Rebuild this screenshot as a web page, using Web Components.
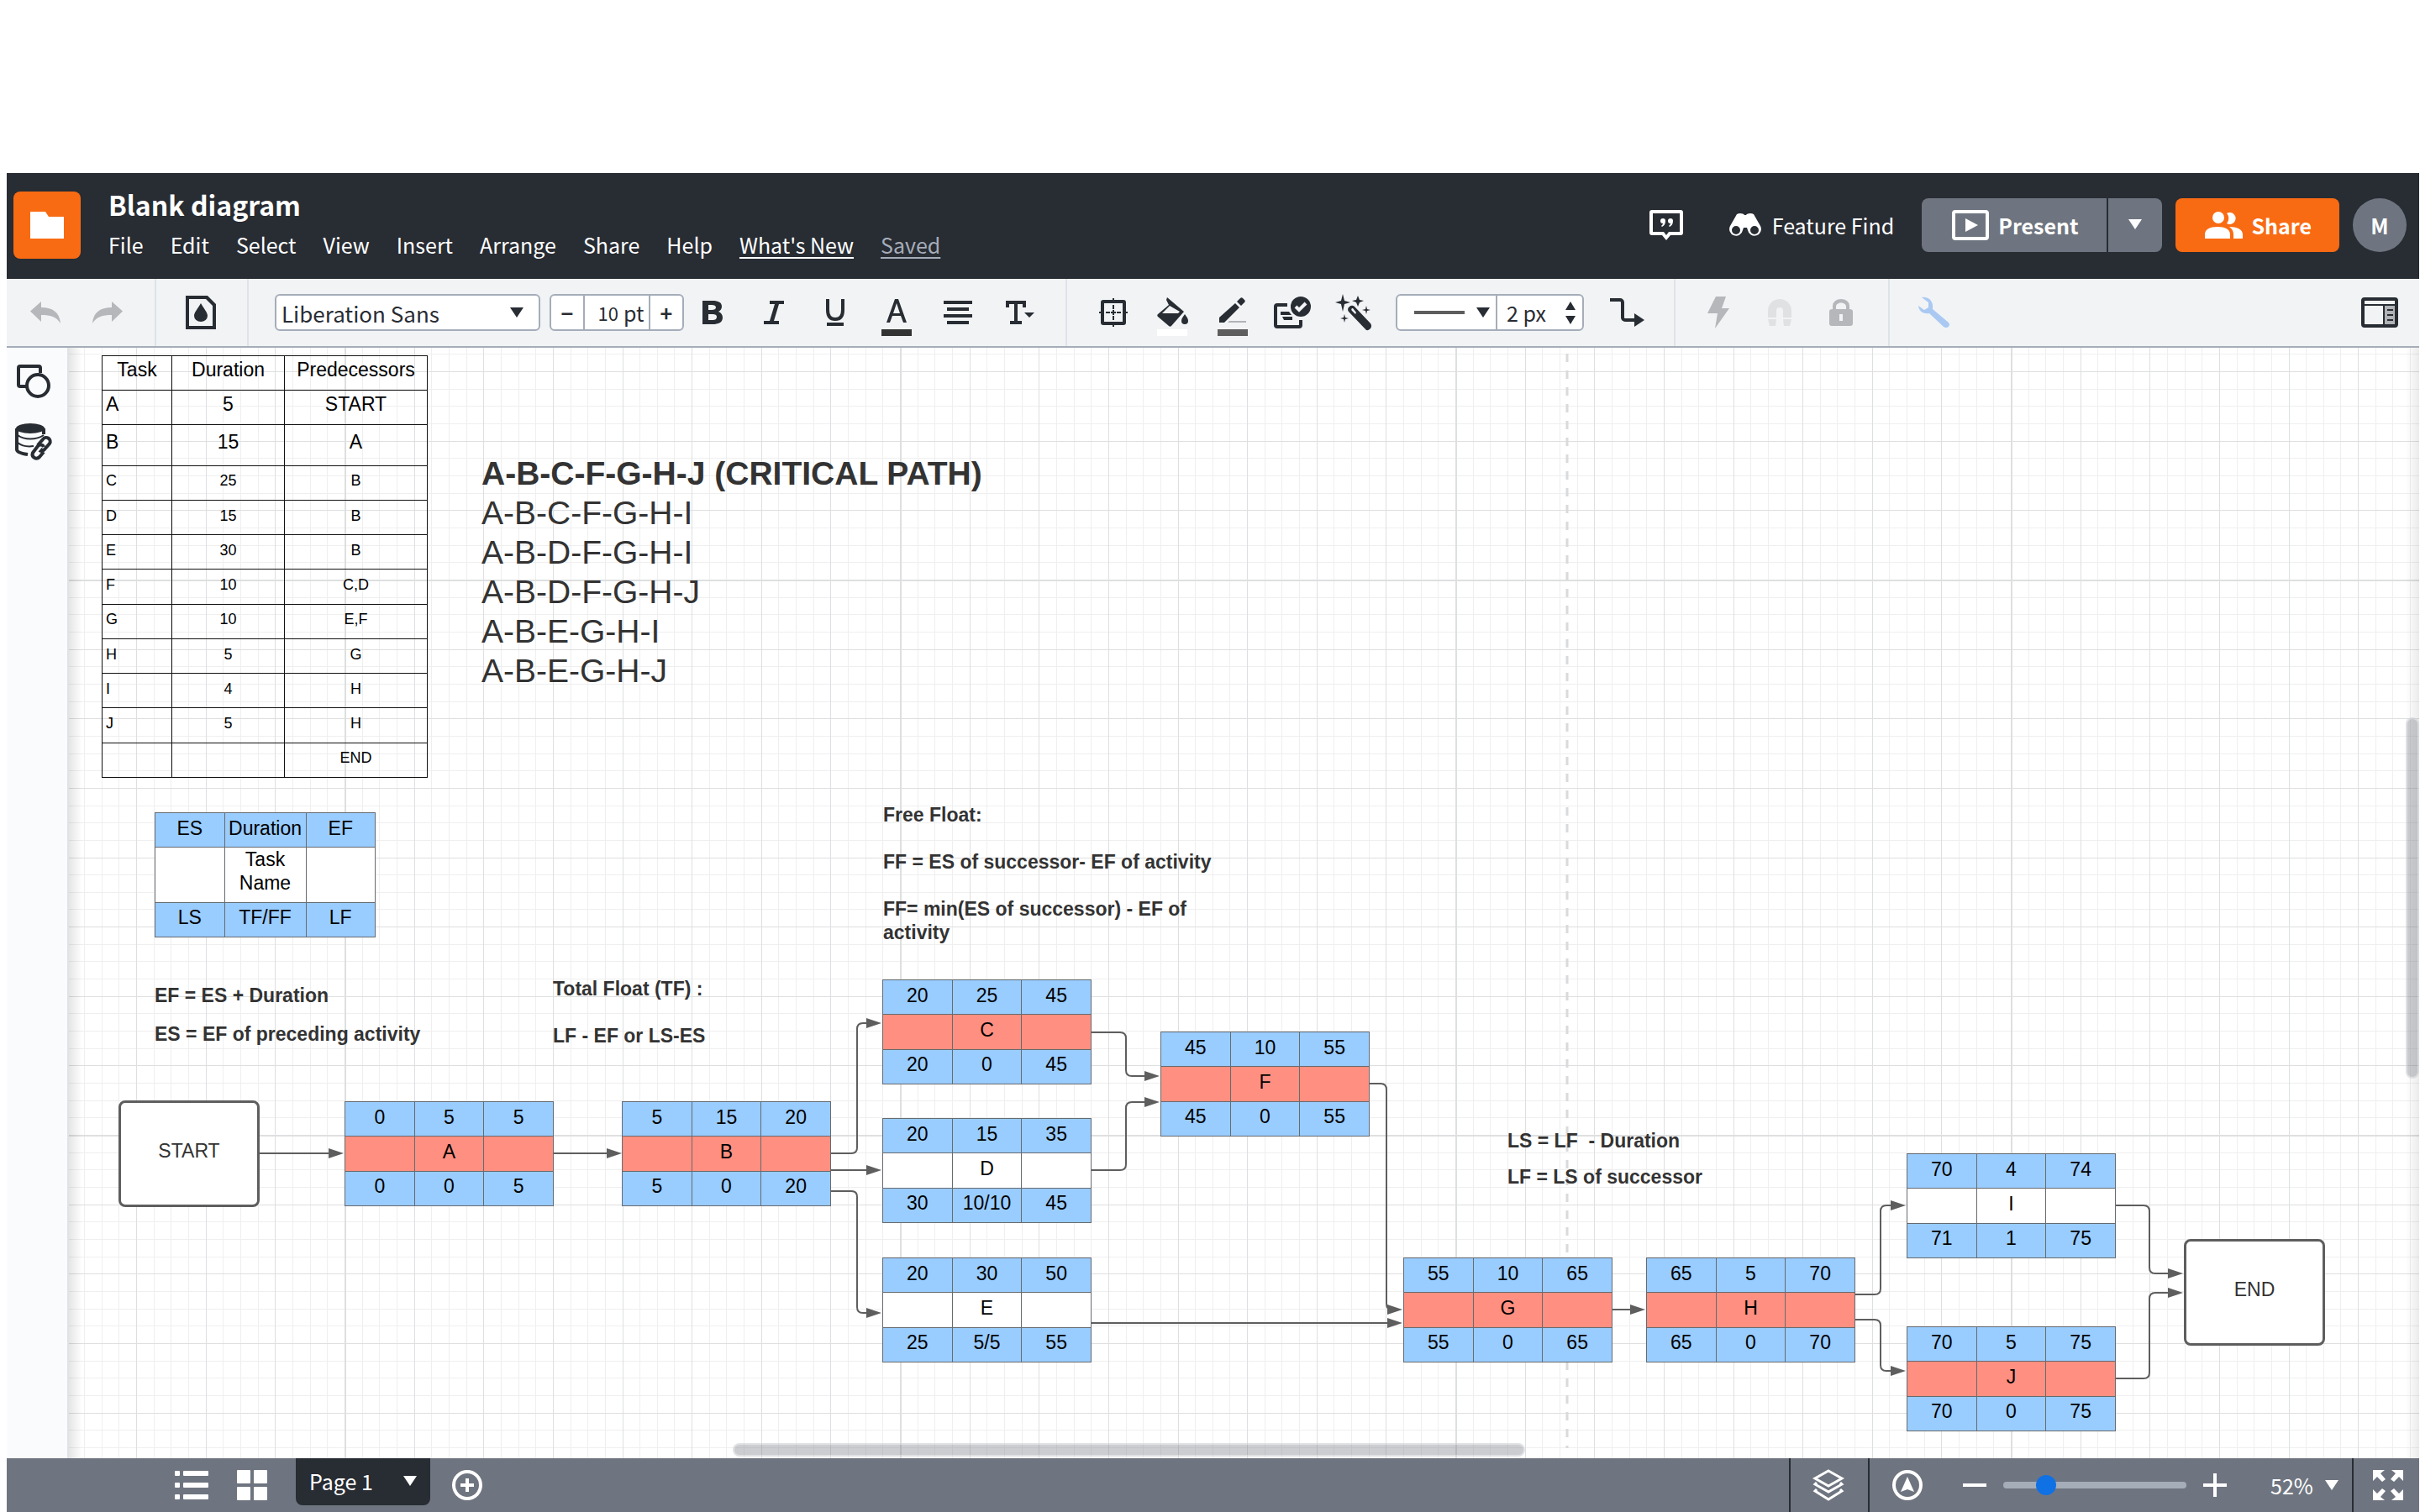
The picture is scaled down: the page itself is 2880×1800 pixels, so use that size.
<!DOCTYPE html>
<html lang="en">
<head>
<meta charset="utf-8">
<title>Blank diagram</title>
<style>
  body {
    margin: 0;
    height: 100vh;
    background-color: #fff;
    font-family: "Noto Sans CJK SC", "Open Sans", sans-serif;
    color: #282c33;
    overflow: hidden;
  }
</style>
</head>
<body>
<diagram-editor>
  <editor-header slot="header" title-text="Blank diagram"></editor-header>
  <editor-toolbar slot="toolbar"></editor-toolbar>
  <side-rail slot="rail"></side-rail>
  <diagram-canvas slot="canvas">
    <task-table x="39" y="9"></task-table>
    <text-note x="491" y="126" size="large"><b>A-B-C-F-G-H-J (CRITICAL PATH)</b>
A-B-C-F-G-H-I
A-B-D-F-G-H-I
A-B-D-F-G-H-J
A-B-E-G-H-I
A-B-E-G-H-J</text-note>
    <task-node class="legend" x="102" y="553" cells="ES,Duration,EF,,Task Name,,LS,TF/FF,LF"></task-node>
    <text-note x="102" y="757"><b>EF = ES + Duration</b></text-note>
    <text-note x="102" y="803"><b>ES = EF of preceding activity</b></text-note>
    <text-note x="576" y="749"><b>Total Float (TF) :

LF - EF or LS-ES</b></text-note>
    <text-note x="969" y="542"><b>Free Float:

FF = ES of successor- EF of activity

FF= min(ES of successor) - EF of activity</b></text-note>
    <text-note x="1712" y="930"><b>LS = LF  - Duration</b></text-note>
    <text-note x="1712" y="973"><b>LF = LS of successor</b></text-note>
    <end-point x="59" y="896">START</end-point>
    <end-point x="2517" y="1061">END</end-point>
    <task-node critical x="328" y="897" cells="0,5,5,,A,,0,0,5"></task-node>
    <task-node critical x="658" y="897" cells="5,15,20,,B,,5,0,20"></task-node>
    <task-node critical x="968" y="752" cells="20,25,45,,C,,20,0,45"></task-node>
    <task-node x="968" y="917" cells="20,15,35,,D,,30,10/10,45"></task-node>
    <task-node x="968" y="1083" cells="20,30,50,,E,,25,5/5,55"></task-node>
    <task-node critical x="1299" y="814" cells="45,10,55,,F,,45,0,55"></task-node>
    <task-node critical x="1588" y="1083" cells="55,10,65,,G,,55,0,65"></task-node>
    <task-node critical x="1877" y="1083" cells="65,5,70,,H,,65,0,70"></task-node>
    <task-node x="2187" y="959" cells="70,4,74,,I,,71,1,75"></task-node>
    <task-node critical x="2187" y="1165" cells="70,5,75,,J,,70,0,75"></task-node>
  </diagram-canvas>
  <status-bar slot="status"></status-bar>
</diagram-editor>

<script>
// name: [width, height, markup]
const ICONS = {
  folder: [40, 32, '<path d="M0 0h18l4 6h18v26H0z"/>'],
  comment: [40, 36, '<path fill-rule="evenodd" d="M3 0h34a3 3 0 0 1 3 3v24a3 3 0 0 1-3 3H25l-5 6-5-6H3a3 3 0 0 1-3-3V3a3 3 0 0 1 3-3zm1 4v22h13l3 4 3-4h13V4z"/><path d="M13 13a3 3 0 1 1 6 0c0 4-2 6-4 7l-1-1c1-1 2-2 2-3-2 0-3-1-3-3zm9 0a3 3 0 1 1 6 0c0 4-2 6-4 7l-1-1c1-1 2-2 2-3-2 0-3-1-3-3z"/>'],
  binoculars: [40, 28, '<path fill-rule="evenodd" d="M10 1c3-2 8-1 9 1h2c1-2 6-3 9-1l8 14a8 8 0 1 1-15 5l-1-3h-4l-1 3A8 8 0 1 1 2 15zM9 15a5 5 0 1 0 0 10 5 5 0 0 0 0-10zm22 0a5 5 0 1 0 0 10 5 5 0 0 0 0-10z"/>'],
  play: [44, 36, '<rect x="2" y="2" width="40" height="32" rx="2" fill="none" stroke="currentColor" stroke-width="4"/><path d="M16 10l15 8-15 8z"/>'],
  people: [45, 32, '<circle cx="16" cy="7" r="7"/><path d="M26 14a7 7 0 1 0 0-12c3 3 3 8 0 12zM0 32V27c0-6 6-9 15-9s15 3 15 9v5zM29 18c9 0 16 3 16 9v5H34v-5c0-4-2-7-5-9z"/>'],
  down: [16, 12, '<path d="M0 0h16l-8 12z"/>'],
  undo: [36, 26, '<path d="M0 11.500L13 0v7c14 0 22 6 23 19C31 18 24 16 13 16v8z"/>'],
  redo: [36, 26, '<path d="M36 11.500L23 0v7C9 7 1 13 0 26c5-8 12-10 23-10v8z"/>'],
  page: [36, 40, '<path fill-rule="evenodd" d="M0 0h26l10 10v30H0zm4 4v32h28V12l-8-8z"/><path d="M18 9c4 7 8 11 8 15a8 7 0 0 1-16 0c0-4 4-8 8-15z"/>'],
  bold: [24, 28, '<path fill-rule="evenodd" d="M0 0h12c7 0 11 2 11 7 0 3-2 5-4 6 3 1 5 4 5 7 0 6-5 8-12 8H0zm7 5v6h4c3 0 5-1 5-3s-2-3-5-3zm0 11v7h5c3 0 5-1 5-4 0-2-2-3-5-3z"/>'],
  italic: [24, 28, '<path d="M7 0h17v4h-6l-6 20h6v4H0v-4h7l6-20H7z"/>'],
  underline: [24, 32, '<path d="M3 0v13c0 7 3 11 9 11s9-4 9-11V0" fill="none" stroke="currentColor" stroke-width="4"/><path d="M2 28h20v4H2z"/>'],
  color: [36, 46, '<path fill-rule="evenodd" d="M16 2h4l10 28h-4l-3-8H13l-3 8H6zm2 5l-4 12h8z"/><path fill="#333" d="M0 38h36v8H0z"/>'],
  align: [34, 28, '<path d="M0 0h34v4H0zM4 8h26v4H4zM0 16h34v4H0zM4 24h26v4H4z"/>'],
  text: [36, 28, '<path d="M2 0h24v8h-4V4h-6v20h5v4H7v-4h5V4H6v4H2zM24 14h12l-6 6z"/>'],
  frame: [34, 34, '<rect x="4" y="4" width="26" height="26" rx="1" fill="none" stroke="currentColor" stroke-width="4"/><path d="M16 0h2v4h-2zM16 30h2v4h-2zM0 16h4v2H0zM30 16h4v2h-4zM16 8h2v5h-2zM16 21h2v5h-2zM8 16h5v2H8zM21 16h5v2h-5zM14 16h6v2h-6zM16 14h2v6h-2z"/>'],
  bucket: [38, 46, '<path fill-rule="evenodd" d="M12 0l20 17-15 17c-1 1-2 1-3 0L1 23c-1-1-1-2 0-3L14 9l-3-6zm3 10l-9 9h19l2-2z"/><path d="M33 20c3 4 4 6 4 8a4 4 0 0 1-8 0c0-2 1-4 4-8z"/><path fill="#fff" d="M0 38h36v8H0z"/>'],
  pencil: [36, 46, '<path d="M2 24L21 7l5 5L8 30H2zM23 5l4-4c1-1 2-1 3 0l2 2c1 1 1 2 0 3l-4 4z"/><path fill="#b1b3b6" d="M14 28h20v2H12z"/><path fill="#5e5e5e" d="M0 38h36v8H0z"/>'],
  form: [44, 38, '<path d="M16 10H4a2 2 0 0 0-2 2v22a2 2 0 0 0 2 2h26a2 2 0 0 0 2-2v-6" fill="none" stroke="currentColor" stroke-width="4"/><path d="M8 18h10l3 4H8zM10 24h12v4H12z"/><circle cx="32" cy="12" r="12"/><path d="M26 12l4 4 8-8" fill="none" stroke="#f1f3f5" stroke-width="4"/>'],
  wand: [40, 44, '<path fill-rule="evenodd" d="M17 15a4 4 0 0 1 6 0l19 20c3 4-1 9-5 8L16 21a4 4 0 0 1 1-6zm3 2c-1 1-1 2 0 3l4 4 1-2-4-5z"/><path d="M9 0l2 8 7 2-7 2-2 9-2-9-7-2 7-2zM27 2l2 5 5 1-5 2-2 5-2-5-5-2 5-1zM37 14l1 4 4 1-4 1-1 4-1-4-4-1 4-1zM11 24l1 4 4 1-4 1-1 4-1-4-4-1 4-1z"/>'],
  elbow: [41, 34, '<path d="M0 2h12a3 3 0 0 1 3 3v18a3 3 0 0 0 3 3h12" fill="none" stroke="currentColor" stroke-width="4"/><path d="M29 18l12 8-12 8z"/>'],
  up: [12, 10, '<path d="M0 10L6 0l6 10z"/>'],
  bolt: [26, 38, '<path d="M10 0h12l-5 14h9L9 38l3-18H0z"/>'],
  magnet: [28, 32, '<path d="M0 22V14a14 14 0 0 1 28 0v8H18v-8a4 4 0 0 0-8 0v8zM0 24h10l-1 8H2zM18 24h10l-2 8h-7z"/>'],
  lock: [28, 32, '<path fill-rule="evenodd" d="M4 12V8a10 8 0 0 1 20 0v4c3 0 4 1 4 3v14c0 2-1 3-3 3H3c-2 0-3-1-3-3V15c0-2 1-3 4-3zm4 0h12V9c0-6-12-6-12 0zm4 6v8h4v-8z"/>'],
  wrench: [37, 36, '<path d="M4 0c7-1 12 3 13 9v5l19 16c3 4-2 8-6 5L13 19c-7 1-12-2-13-9l7 5 5-3v-6z"/>'],
  panel: [44, 36, '<path fill="#b1b3b6" d="M28 10h12v22H28z"/><path fill-rule="evenodd" d="M4 0h36a4 4 0 0 1 4 4v28a4 4 0 0 1-4 4H4a4 4 0 0 1-4-4V4a4 4 0 0 1 4-4zm0 4v4h36V4zm0 6v22h22V10zm24 0v22h12V10z"/><path d="M31 14h7v2h-7zM31 20h7v2h-7zM31 26h7v2h-7z"/>'],
  shapes: [40, 40, '<path d="M12 26H4a2 2 0 0 1-2-2V4a2 2 0 0 1 2-2h22a2 2 0 0 1 2 2v6" fill="none" stroke="currentColor" stroke-width="4"/><circle cx="25" cy="25" r="13" fill="none" stroke="currentColor" stroke-width="4"/>'],
  data: [44, 44, '<ellipse cx="18" cy="6" rx="17" ry="6"/><path d="M2 6v25c0 3 6 5 13 6M34 6v7" fill="none" stroke="currentColor" stroke-width="4"/><path d="M3 14c8 6 22 6 31 0M3 23c5 4 12 5 19 4" fill="none" stroke="currentColor" stroke-width="2"/><path d="M27 26l6-7c4-5 11 0 8 5l-6 7c-2 2-5 2-6 1M33 30l-1 2M34 28c-1-3-5-3-7-1l-6 8c-2 5 4 9 8 5l5-6" fill="none" stroke="currentColor" stroke-width="4"/>'],
  list: [40, 34, '<rect width="6" height="6" rx="1"/><rect x="10" width="30" height="6" rx="1"/><rect y="14" width="6" height="6" rx="1"/><rect x="10" y="14" width="30" height="6" rx="1"/><rect y="28" width="6" height="6" rx="1"/><rect x="10" y="28" width="30" height="6" rx="1"/>'],
  tiles: [36, 36, '<rect width="16" height="16" rx="1"/><rect x="20" width="16" height="16" rx="1"/><rect y="20" width="16" height="16" rx="1"/><rect x="20" y="20" width="16" height="16" rx="1"/>'],
  add: [36, 36, '<circle cx="18" cy="18" r="16" fill="none" stroke="currentColor" stroke-width="4"/><path d="M16 10h4v6h6v4h-6v6h-4v-6h-6v-4h6z"/>'],
  layers: [36, 38, '<path d="M18 2L34 11 18 20 2 11zM4 16l-2 2 16 9 16-9-2-2M4 24l-2 2 16 10 16-10-2-2" fill="none" stroke="currentColor" stroke-width="3"/>'],
  compass: [36, 36, '<circle cx="18" cy="18" r="16" fill="none" stroke="currentColor" stroke-width="4"/><path d="M18 8l8 18-8-3-8 3z"/>'],
  minus: [28, 4, '<path d="M0 0h28v4H0z"/>'],
  plus: [28, 28, '<path d="M12 0h4v12h12v4H16v12h-4V16H0v-4h12z"/>'],
  expand: [36, 36, '<path d="M0 0h14l-5 4 6 7-4 3-6-6-5 5zM36 0v13l-5-5-6 6-4-3 6-7-5-4zM0 36V23l5 5 6-6 4 3-6 7 5 4zM36 36H22l5-4-6-7 4-3 6 6 5-5z"/>']
}

const icon = (name) => {
  const [w, h, body] = ICONS[name]
  return `<svg class="icon" width="${w}" height="${h}" viewBox="0 0 ${w} ${h}" fill="currentColor" aria-hidden="true">${body}</svg>`
}

const controls = `
    *, *::before { box-sizing: border-box; }
    button, input, select {
      font: inherit;
      color: inherit;
      background: none;
      border: 0;
      margin: 0;
      padding: 0;
      outline: none;
      appearance: none;
      -webkit-appearance: none;
    }
    button { display: flex; align-items: center; justify-content: center; white-space: nowrap; }
    .icon { display: block; flex: none; overflow: visible; }
`

class BaseElement extends HTMLElement {
  constructor() {
    super()
    this._shadowRoot = this.attachShadow({ mode: 'open' })
  }

  connectedCallback() {
    this._shadowRoot.innerHTML = `<style>${controls}${this.styles()}</style>${this.render()}`
  }

  // puts an item of the free canvas at its x and y
  place() {
    return `:host { position: absolute; left: ${this.getAttribute('x')}px; top: ${this.getAttribute('y')}px; }`
  }
}

class DiagramEditor extends BaseElement {
  styles() {
    return `
      :host {
        display: grid;
        grid-template: auto auto minmax(0, 1fr) auto / auto minmax(0, 1fr);
        box-sizing: border-box;
        height: 100vh;
        padding: 206px 1px 0 8px;
      }
      slot[name=header], slot[name=toolbar], slot[name=status] { display: block; grid-column: 1 / -1; }
      slot[name=rail], slot[name=canvas] { display: grid; }
    `
  }

  render() {
    return `
      <slot name="header"></slot>
      <slot name="toolbar"></slot>
      <slot name="rail"></slot>
      <slot name="canvas"></slot>
      <slot name="status"></slot>
    `
  }
}

class EditorHeader extends BaseElement {
  styles() {
    return `
      :host {
        display: flex;
        justify-content: space-between;
        height: 126px;
        box-sizing: border-box;
        padding: 0 15px 2px 8px;
        background-color: #282c33;
        color: #fff;
        font-size: 25px;
        line-height: 36px;
      }
      .left, .right, nav, .split { display: flex; }
      .left { gap: 33px; }
      .logo {
        width: 80px;
        height: 80px;
        margin-top: 22px;
        border-radius: 8px;
        background-color: #f96b13;
      }
      .names { display: flex; flex-direction: column; gap: 10px; padding-top: 17px; }
      h1 { margin: 0; font-size: 32px; line-height: 40px; font-weight: 700; }
      nav { gap: 32px; }
      a { color: #fff; text-underline-offset: 4px; }
      a.saved { color: #a5adb9; }
      .right { align-items: center; gap: 16px; }
      .find { gap: 12px; margin: 0 17px 0 38px; }
      .present, .more, .share { height: 64px; font-weight: 700; }
      .split { gap: 2px; }
      .present, .more { background-color: #6f7580; }
      .present { gap: 11px; padding: 0 34px 0 36px; border-radius: 8px 0 0 8px; }
      .more { width: 64px; border-radius: 0 8px 8px 0; padding-bottom: 2px; }
      .share { gap: 10px; padding: 0 33px 0 35px; border-radius: 8px; background-color: #f96b13; }
      .avatar { width: 64px; height: 64px; border-radius: 50%; background-color: #6f7580; font-weight: 700; }
    `
  }

  render() {
    const menus = ['File', 'Edit', 'Select', 'View', 'Insert', 'Arrange', 'Share', 'Help']
    return `
      <div class="left">
        <button class="logo" aria-label="Documents">${icon('folder')}</button>
        <div class="names">
          <h1>${this.getAttribute('title-text')}</h1>
          <nav>
            ${menus.map((menu) => `<button>${menu}</button>`).join('')}
            <a href="#new">What's New</a>
            <a class="saved" href="#saved">Saved</a>
          </nav>
        </div>
      </div>
      <div class="right">
        <button aria-label="Comments">${icon('comment')}</button>
        <button class="find">${icon('binoculars')}Feature Find</button>
        <div class="split">
          <button class="present">${icon('play')}Present</button>
          <button class="more" aria-label="Present options">${icon('down')}</button>
        </div>
        <button class="share">${icon('people')}Share</button>
        <button class="avatar">M</button>
      </div>
    `
  }
}

class EditorToolbar extends BaseElement {
  styles() {
    return `
      :host {
        display: flex;
        height: 82px;
        box-sizing: border-box;
        background-color: #f1f3f5;
        border-bottom: 2px solid #a5adb9;
        font-size: 25px;
      }
      .group { display: flex; align-items: center; border-right: 2px solid #dfe3e8; }
      .history { padding: 0 38px 0 28px; gap: 38px; color: #b5b7ba; }
      .theme { padding: 0 37px 0 35px; }
      .type { padding: 0 34px 0 31px; gap: 11px; }
      .shape { padding: 0 35px 0 34px; gap: 31px; }
      .actions { padding: 0 35px 0 30px; color: #b5b7ba; }
      .last { flex: auto; justify-content: space-between; border: 0; padding: 0 25px 0 34px; }
      .icons { display: flex; gap: 31px; }
      .shape .icons { gap: 29px; }
      .icons button { width: 42px; height: 44px; }
      .icons .swatch { align-items: flex-start; }
      .swatch .icon { margin-top: 4px; }
      .icons .magnet { color: #dfe1e3; }
      .wrench { color: #aac9f2; }
      .box {
        display: flex;
        align-items: center;
        height: 44px;
        border: 2px solid #a5adb9;
        border-radius: 6px;
        background-color: #fff;
      }
      .box > * { height: 40px; }
      .font { position: relative; width: 316px; }
      .font select { width: 100%; padding: 0 40px 0 6px; font-size: 26px; }
      .font .icon { position: absolute; right: 18px; top: 14px; height: 12px; pointer-events: none; }
      .size { width: 160px; margin-right: 2px; }
      .size button { width: 38px; font-weight: 700; }
      .size label { display: flex; flex: auto; align-items: center; gap: 6px; border: solid #a5adb9; border-width: 0 2px; }
      .size input { width: 40px; font-size: 22px; text-align: right; }
      .line { width: 224px; }
      .style { width: 119px; gap: 14px; padding-left: 20px; justify-content: flex-start; border-right: 2px solid #a5adb9; }
      .style i { width: 60px; height: 4px; background-color: #5e5e5e; }
      .line input { width: 81px; padding-left: 11px; }
      .steps { display: flex; flex-direction: column; justify-content: center; gap: 7px; }
      .flip { transform: scaleY(-1); }
    `
  }

  render() {
    const button = (name, label, cls = '') => `<button class="${cls}" aria-label="${label}">${icon(name)}</button>`
    return `
      <div class="group history">${button('undo', 'Undo')}${button('redo', 'Redo')}</div>
      <div class="group theme">${button('page', 'Theme')}</div>
      <div class="group type">
        <div class="box font">
          <select aria-label="Font"><option>Liberation Sans</option></select>
          ${icon('down')}
        </div>
        <div class="box size">
          <button aria-label="Smaller">−</button>
          <label><input type="text" value="10" aria-label="Font size">pt</label>
          <button aria-label="Larger">+</button>
        </div>
        <div class="icons">
          ${button('bold', 'Bold')}
          ${button('italic', 'Italic')}
          ${button('underline', 'Underline')}
          ${button('color', 'Text color', 'swatch')}
          ${button('align', 'Align')}
          ${button('text', 'Text options')}
        </div>
      </div>
      <div class="group shape">
        <div class="icons">
          ${button('frame', 'Shape options')}
          ${button('bucket', 'Fill color', 'swatch')}
          ${button('pencil', 'Border color', 'swatch')}
          ${button('form', 'Conditional formatting')}
          ${button('wand', 'Magic format')}
        </div>
        <div class="box line">
          <button class="style" aria-label="Line style"><i></i>${icon('down')}</button>
          <input type="text" value="2 px" aria-label="Line width">
          <div class="steps">
            <button aria-label="Thicker">${icon('up')}</button>
            <button class="flip" aria-label="Thinner">${icon('up')}</button>
          </div>
        </div>
        ${button('elbow', 'Line shape')}
      </div>
      <div class="group actions">
        <div class="icons">
          ${button('bolt', 'Actions')}
          ${button('magnet', 'Magnet', 'magnet')}
          ${button('lock', 'Lock')}
        </div>
      </div>
      <div class="group last">
        ${button('wrench', 'Tools', 'wrench')}
        ${button('panel', 'Toggle panel')}
      </div>
    `
  }
}

class SideRail extends BaseElement {
  styles() {
    return `
      :host {
        display: flex;
        flex-direction: column;
        align-items: center;
        gap: 30px;
        width: 74px;
        box-sizing: border-box;
        padding: 20px 8px 0 0;
        background-color: #fafbfd;
        border-right: 2px solid #dfe3e8;
      }
    `
  }

  render() {
    return `
      <button aria-label="Shapes">${icon('shapes')}</button>
      <button aria-label="Data">${icon('data')}</button>
    `
  }
}

// corners of each connector, the last point is the arrow tip
const CONNECTORS = [
  [[227, 959], [327, 959]],
  [[577, 959], [658, 959]],
  [[907, 959], [938, 959], [938, 804], [967, 804]],
  [[907, 979], [967, 979]],
  [[907, 1004], [938, 1004], [938, 1149], [967, 1149]],
  [[1217, 815], [1258, 815], [1258, 867], [1298, 867]],
  [[1217, 979], [1258, 979], [1258, 898], [1298, 898]],
  [[1548, 876], [1568, 876], [1568, 1145], [1587, 1145]],
  [[1217, 1161], [1587, 1161]],
  [[1836, 1145], [1876, 1145]],
  [[2125, 1127], [2156, 1127], [2156, 1021], [2186, 1021]],
  [[2125, 1157], [2156, 1157], [2156, 1218], [2186, 1218]],
  [[2436, 1021], [2476, 1021], [2476, 1102], [2516, 1102]],
  [[2436, 1227], [2476, 1227], [2476, 1125], [2516, 1125]]
]

class DiagramCanvas extends BaseElement {
  styles() {
    return `
      :host {
        display: block;
        position: relative;
        overflow: hidden;
        background-color: #fff;
        font-family: "Liberation Sans", Arial, sans-serif;
        font-size: 23px;
        line-height: 28px;
      }
      svg { position: absolute; inset: 0; width: 100%; height: 100%; }
      .shade, .bar { position: absolute; }
      .shade { top: 0; bottom: 0; width: 16px; }
      .start { left: 0; background: linear-gradient(to right, rgba(0, 0, 0, .1), transparent); }
      .end { right: 0; background: linear-gradient(to left, rgba(0, 0, 0, .08), transparent); }
      .bar { border-radius: 8px; background-color: rgba(111, 117, 128, .36); border: 2px solid rgba(255, 255, 255, .4); }
      .down { right: 0; top: 33.3%; width: 16px; height: 32.500%; }
      .across { bottom: 2px; left: 28.250%; width: 33.700%; height: 16px; }
    `
  }

  grid() {
    const bands = { minor: '', major: '', page: '' }
    for (let i = 0; i < 32; i += 1) {
      const at = Math.round((i * 661) / 32)
      let band = 'minor'
      if (i % 4 === 0) band = 'major'
      if (i === 0) band = 'page'
      const size = band === 'page' ? 2 : 1
      bands[band] += `M${at} 0h${size}v661h-${size}zM0 ${at}h661v${size}h-661z`
    }
    return `
      <pattern id="grid" x="328" y="937" width="661" height="661" patternUnits="userSpaceOnUse">
        <path fill="#efefef" d="${bands.minor}"/>
        <path fill="#dedfe0" d="${bands.major}"/>
        <path fill="#dedfe0" d="${bands.page}"/>
      </pattern>
    `
  }

  connector(points) {
    const [tipX, tipY] = points[points.length - 1]
    let d = `M${points[0]}`
    for (let i = 1; i < points.length - 1; i += 1) {
      const [x, y] = points[i]
      const ends = [points[i - 1], points[i + 1]].map(([px, py]) => [x + Math.sign(px - x) * 7, y + Math.sign(py - y) * 7])
      d += `L${ends[0]}Q${x},${y} ${ends[1]}`
    }
    d += `L${tipX - 14},${tipY}`
    return `
      <path d="${d}" fill="none" stroke="#5e5e5e" stroke-width="2"/>
      <path d="M${tipX} ${tipY}l-18 -6v12z" fill="#5e5e5e"/>
    `
  }

  render() {
    return `
      <svg aria-hidden="true">
        <defs>${this.grid()}</defs>
        <rect width="100%" height="100%" fill="url(#grid)"/>
        <line x1="1783" y1="7" x2="1783" y2="1310" stroke="#d9dadb" stroke-width="3" stroke-dasharray="10"/>
        ${CONNECTORS.map((points) => this.connector(points)).join('')}
      </svg>
      <slot></slot>
      <div class="shade start"></div>
      <div class="shade end"></div>
      <div class="bar down"></div>
      <div class="bar across"></div>
    `
  }
}

class TaskTable extends BaseElement {
  styles() {
    return `
      ${this.place()}
      table { border-collapse: collapse; table-layout: fixed; width: 388px; height: 503px; color: #000; }
      th, td { height: 41px; padding: 0 5px 8px; border: 1px solid #111; font-weight: 400; text-align: center; line-height: 28px; }
      td:first-child { text-align: left; padding-left: 4px; }
      .tall td { height: 48px; }
      .small td { font-size: 18px; padding-bottom: 5px; }
    `
  }

  render() {
    const rows = [
      ['A', '5', 'START'], ['B', '15', 'A', 'tall'], ['C', '25', 'B', 'small'], ['D', '15', 'B', 'small'],
      ['E', '30', 'B', 'small'], ['F', '10', 'C,D', 'small'], ['G', '10', 'E,F', 'small'], ['H', '5', 'G', 'small'],
      ['I', '4', 'H', 'small'], ['J', '5', 'H', 'small'], ['', '', 'END', 'small']
    ]
    return `
      <table>
        <colgroup><col style="width: 83px"><col style="width: 134px"><col></colgroup>
        <tr><th>Task</th><th>Duration</th><th>Predecessors</th></tr>
        ${rows.map(([task, days, before, cls = '']) => `<tr class="${cls}"><td>${task}</td><td>${days}</td><td>${before}</td></tr>`).join('')}
      </table>
    `
  }
}

class TaskNode extends BaseElement {
  styles() {
    return `
      ${this.place()}
      table { border-collapse: collapse; table-layout: fixed; width: 249px; height: 125px; background-color: #fff; color: #000; }
      td { height: 41px; padding: 0 0 5px; border: 1px solid #666b70; text-align: center; line-height: 28px; }
      tr:nth-child(odd) { background-color: #99ccff; }
      :host([critical]) tr:nth-child(2) { background-color: #ff8f80; }
      :host(.legend) table { width: 263px; height: 149px; }
      :host(.legend) col:nth-child(2) { width: 97px; }
      :host(.legend) tr:nth-child(2) td { height: 65px; padding-bottom: 8px; }
    `
  }

  render() {
    const cells = this.getAttribute('cells').split(',')
    const row = (from) => `<tr>${cells.slice(from, from + 3).map((cell) => `<td>${cell}</td>`).join('')}</tr>`
    return `<table><colgroup><col><col><col></colgroup>${row(0)}${row(3)}${row(6)}</table>`
  }
}

class EndPoint extends BaseElement {
  styles() {
    return `
      ${this.place()}
      :host {
        display: flex;
        align-items: center;
        justify-content: center;
        box-sizing: border-box;
        width: 168px;
        height: 127px;
        padding-bottom: 7px;
        border: 3px solid #5e5e5e;
        border-radius: 8px;
        background-color: #fff;
        color: #333;
      }
    `
  }

  render() {
    return '<slot></slot>'
  }
}

class TextNote extends BaseElement {
  styles() {
    return `
      ${this.place()}
      :host { display: block; max-width: 400px; white-space: pre-wrap; color: #333; }
      :host([size=large]) { max-width: none; font-size: 39px; line-height: 47px; }
    `
  }

  render() {
    return '<slot></slot>'
  }
}

class StatusBar extends BaseElement {
  styles() {
    return `
      :host {
        display: flex;
        justify-content: space-between;
        height: 64px;
        background-color: #6f7580;
        color: #fff;
        font-size: 25px;
      }
      .pages, .tools, .zoom { display: flex; align-items: center; }
      .pages { padding-left: 200px; gap: 34px; }
      .tab {
        align-self: flex-start;
        justify-content: space-between;
        width: 160px;
        height: 56px;
        padding: 0 16px 3px;
        border-radius: 0 0 8px 8px;
        background-color: #282c33;
      }
      .pages .add { margin-left: -8px; }
      .tools { align-items: stretch; }
      .tools > * { border-left: 2px solid #282c33; }
      .layers { width: 94px; padding-right: 2px; }
      .full { width: 80px; padding-left: 4px; }
      .zoom { padding: 0 16px 0 27px; }
      .out { margin: 0 20px 0 48px; height: 28px; }
      .in { margin: 0 52px 0 20px; }
      input { width: 218px; height: 8px; border-radius: 4px; background-color: #a5adb9; }
      input::-webkit-slider-thumb {
        -webkit-appearance: none;
        width: 24px;
        height: 24px;
        border-radius: 50%;
        background-color: #1071e5;
      }
      .level { position: relative; }
      .level select { width: 81px; }
      .level .icon { position: absolute; right: 0; top: 12px; pointer-events: none; }
    `
  }

  render() {
    return `
      <div class="pages">
        <button aria-label="Page list">${icon('list')}</button>
        <button aria-label="Page tiles">${icon('tiles')}</button>
        <button class="tab">Page 1${icon('down')}</button>
        <button class="add" aria-label="Add page">${icon('add')}</button>
      </div>
      <div class="tools">
        <button class="layers" aria-label="Layers">${icon('layers')}</button>
        <div class="zoom">
          <button aria-label="Navigator">${icon('compass')}</button>
          <button class="out" aria-label="Zoom out">${icon('minus')}</button>
          <input type="range" value="20" aria-label="Zoom">
          <button class="in" aria-label="Zoom in">${icon('plus')}</button>
          <div class="level">
            <select aria-label="Zoom level"><option>52%</option></select>
            ${icon('down')}
          </div>
        </div>
        <button class="full" aria-label="Full screen">${icon('expand')}</button>
      </div>
    `
  }
}

customElements.define('diagram-editor', DiagramEditor)
customElements.define('editor-header', EditorHeader)
customElements.define('editor-toolbar', EditorToolbar)
customElements.define('side-rail', SideRail)
customElements.define('diagram-canvas', DiagramCanvas)
customElements.define('task-table', TaskTable)
customElements.define('task-node', TaskNode)
customElements.define('end-point', EndPoint)
customElements.define('text-note', TextNote)
customElements.define('status-bar', StatusBar)
</script>
</body>
</html>
